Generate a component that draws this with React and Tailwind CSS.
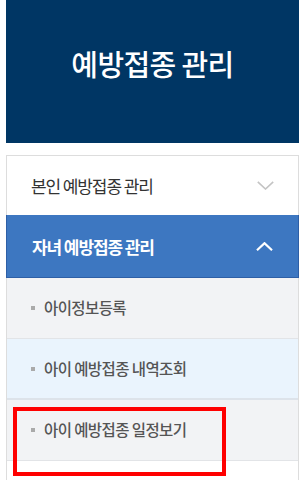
import React from "react";

const font = { fontFamily: '"Noto Sans CJK KR", "Noto Sans", sans-serif' };

function ChevronDown() {
  return (
    <svg width="17" height="9" viewBox="0 0 17 9" fill="none">
      <polyline points="0.8,0.8 8.5,8 16.2,0.8" stroke="#c4c4c4" strokeWidth="1.6" />
    </svg>
  );
}

function ChevronUp() {
  return (
    <svg width="17" height="9" viewBox="0 0 17 9" fill="none">
      <polyline points="1,8.2 8.5,1.2 16,8.2" stroke="#ffffff" strokeWidth="2.2" />
    </svg>
  );
}

function SubItem({ label, active }) {
  return (
    <div
      className={`flex items-center h-[61px] pl-[24px] ${
        active ? "bg-[#eaf4fd] border-b-2 border-[#dde3ea]" : "bg-[#f2f3f5] border-b border-[#e2e4e7]"
      }`}
    >
      <span className="w-[4px] h-[4px] bg-[#aaaaaa] mr-[9px]" />
      <span className="text-[15.5px] text-[#555555] tracking-[-0.6px] font-medium leading-none">{label}</span>
    </div>
  );
}

export default function App() {
  return (
    <div className="relative w-[305px] h-[480px] bg-white overflow-hidden" style={font}>
      <div className="mx-[6px] h-[143px] bg-[#003664] flex items-center justify-center pb-[17px]">
        <span className="text-white text-[29px] font-medium tracking-[-0.6px] leading-none">예방접종 관리</span>
      </div>
      <div className="mx-[6px] mt-[12px] border border-[#dddddd] border-b-0">
        <div className="h-[59px] flex items-center justify-between pl-[24px] pr-[24px] bg-white">
          <span className="text-[17px] text-[#333333] tracking-[-1.1px] leading-none">본인 예방접종 관리</span>
          <ChevronDown />
        </div>
        <div className="h-[63px] -mx-px flex items-center justify-between pl-[25px] pr-[25px] bg-[#3d77c1] border border-t-0 border-[#2e5fa6]">
          <span className="text-[17px] text-white font-bold tracking-[-1.1px] leading-none">자녀 예방접종 관리</span>
          <ChevronUp />
        </div>
        <SubItem label="아이정보등록" />
        <SubItem label="아이 예방접종 내역조회" active />
        <SubItem label="아이 예방접종 일정보기" />
        <div className="h-[40px] bg-white" />
      </div>
      <div className="absolute left-[13px] top-[407px] w-[213px] h-[69px] border-4 border-[#ff0000]" />
    </div>
  );
}
